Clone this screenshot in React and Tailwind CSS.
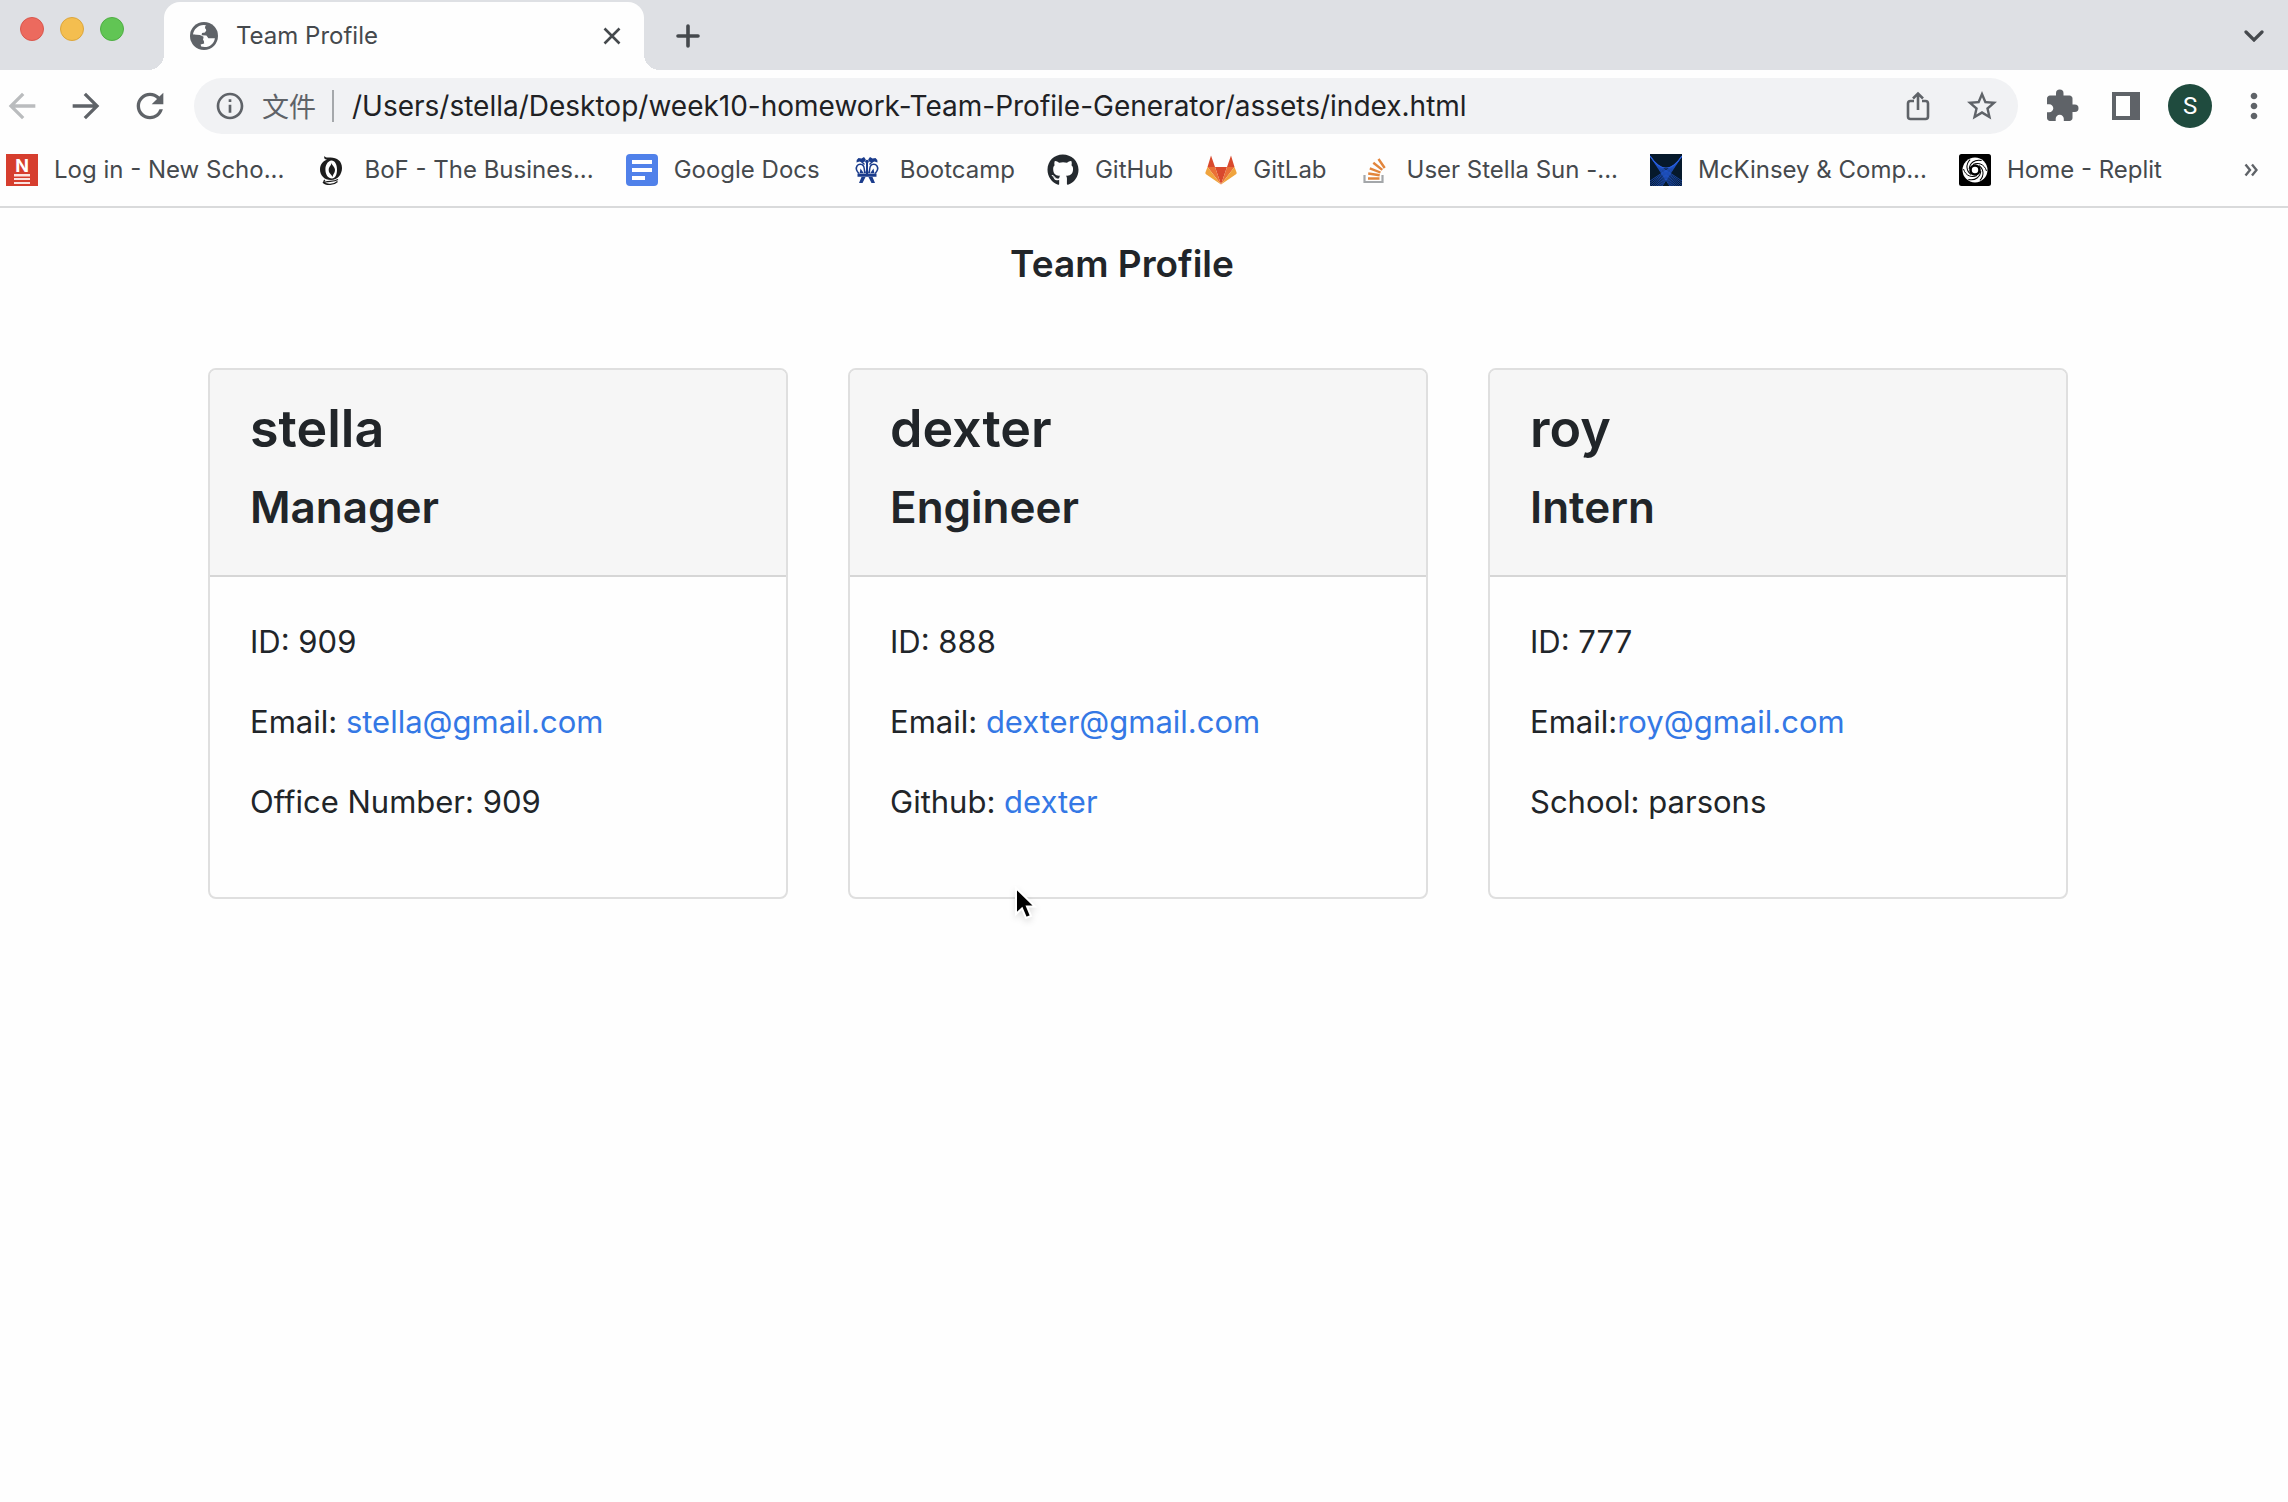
import React from "react";
import {
  MdArrowBack,
  MdArrowForward,
  MdExtension,
  MdInfoOutline,
  MdMoreVert,
  MdRefresh,
  MdStarBorder,
} from "react-icons/md";
import { FaGithub } from "react-icons/fa";

function GlobeIcon() {
  return (
    <svg viewBox="0 0 28 28" className="size-7 shrink-0" aria-hidden="true">
      <circle cx="14" cy="14" r="14" fill="#5f6368" />
      <path
        fill="#fefefe"
        d="M3 12.6C3.6 7.4 8 3.2 13.6 3l2.6.2-1 2.6 1.2 2.4-1.4 2.2-3 .6-.4 2.2 4.8.4 2 2.6h6.5c-.6 5-4.9 8.9-10.3 8.9l-3.4-.5-.6-2.2 3.6-1-.4-3-2.6-1-.6-3.2L8 13.6z"
      />
      <path fill="#5f6368" d="M3.4 12.6 10 13l3.6 1.8-.8 4.4-3.8 1.6v3.4L4 20z" />
      <path fill="#5f6368" d="m15.4 3.4 6 2 3.4 6.4-.4 3.4-4-.4-1-2.6-3.8-1.6 1.2-2.4-1.6-2.2z" />
    </svg>
  );
}

function ShareIcon() {
  return (
    <svg viewBox="0 0 24 30" className="h-[30px] w-6" fill="none" stroke="#5f6368" strokeWidth="2.6" aria-hidden="true">
      <path d="M8 10H4.500A2.500 2.500 0 0 0 2 12.500v13A2.500 2.500 0 0 0 4.500 28h15a2.500 2.500 0 0 0 2.500-2.500v-13A2.500 2.500 0 0 0 19.500 10H16" />
      <path d="M12 19V3M7 7.500l5-5 5 5" />
    </svg>
  );
}

function NewSchoolIcon() {
  return (
    <svg viewBox="0 0 32 32" className="size-8 shrink-0" aria-hidden="true">
      <rect width="32" height="32" fill="#d63e2e" />
      <text x="16" y="17.500" textAnchor="middle" fill="#fff" fontFamily="Inter, sans-serif" fontSize="18" fontWeight="700">N</text>
      <path fill="#fbe3e0" d="M8 20h16v2.500H8zM8 24h16v2H8zM8 28h16v2H8z" />
    </svg>
  );
}

function BofIcon() {
  return (
    <svg viewBox="0 0 32 32" className="size-8 shrink-0" aria-hidden="true">
      <path
        fill="#1c1c1c"
        fillRule="evenodd"
        d="M8.500 2c1 2 3 1.600 6 1.500C21 3.500 26 7 26 14c0 6.500-4.500 12-11 12C8 26 4 21 4 15.500 4 10.500 7 7 11 5.500 8.500 5.600 7.600 4 8.500 2zM15 6.500c-3.500 1-5.600 4.500-5.600 9 0 5 2.600 9 6.600 9 3.200 0 5-3.500 5-9 0-5.200-2.200-9.400-6-9z"
      />
      <path fill="#1c1c1c" d="M15.500 8c-.5 3 3.500 4.500 3.500 8 0 3-2 4-2.500 7-1-2.500-3.800-3.600-3.800-7 0-3.500 3-4.500 2.800-8z" />
      <path fill="none" stroke="#1c1c1c" strokeWidth="1.300" d="M9 26c-2 1.500-1 2.500.5 2 4-1.200 8 .2 12.500-2.500M7 28c3 3.500 11 3 14.500-.5" />
    </svg>
  );
}

function DocsIcon() {
  return (
    <svg viewBox="0 0 32 32" className="size-8 shrink-0" aria-hidden="true">
      <rect width="32" height="32" rx="4" fill="#5081ea" />
      <path fill="#fff" d="M6 6h20v4H6zM6 14h20v4H6zM6 22h13v4H6z" />
    </svg>
  );
}

function CrownIcon() {
  return (
    <svg viewBox="0 0 32 32" className="size-8 shrink-0" aria-hidden="true">
      <g fill="#1b3c8c">
        <path d="M6.500 4l3 .6L12 3l1.800 2.500-.8 2-3 1-2.500-1-3 1 .2-2.500zM23.500 4l-3 .6L18 3l-1.800 2.500.8 2 3 1 2.500-1 3 1-.2-2.500z" />
        <path d="M10 7l3 3-1 1-3-3zM20 7l-3 3 1 1 3-3z" />
        <circle cx="15" cy="7.500" r="1.800" />
        <path d="M14 9h2v11h-2zM5.500 19.500h19v3.200h-19z" />
        <path d="M8.500 14.500l3.200 4.500h-4zM21.500 14.500L18.300 19h4zM15 14l2 5h-4z" />
        <path d="M9.500 23h4l-3 6H7zM20.500 23h-4l3 6H23z" />
      </g>
      <path
        fill="none"
        stroke="#1b3c8c"
        strokeWidth="1.500"
        d="M7 19.500C4.500 17 3.500 14.500 5 12c1.500-2.200 5-2.200 6.500 0 .8 1.500 1 4 1.200 7M23 19.500c2.500-2.500 3.500-5 2-7.500-1.500-2.200-5-2.200-6.500 0-.8 1.500-1 4-1.200 7"
      />
    </svg>
  );
}

function GitLabIcon() {
  return (
    <svg viewBox="0 0 32 32" className="size-8 shrink-0" aria-hidden="true">
      <path fill="#d9492d" d="M16 30.500 22 13H10zM6 1.500 2.500 13H10zM26 1.500 29.500 13H22z" />
      <path fill="#ea7036" d="M16 30.500 10 13H2.500zM16 30.500 22 13h7.500z" />
      <path fill="#f0a43e" d="M2.500 13 .4 18.600c-.2.700 0 1.300.6 1.700l15 10.200zM29.500 13l2.100 5.600c.2.700 0 1.300-.6 1.700l-15 10.200z" />
    </svg>
  );
}

function StackIcon() {
  return (
    <svg viewBox="0 0 32 32" className="size-8 shrink-0" fill="none" aria-hidden="true">
      <path stroke="#a4a7aa" strokeWidth="2.200" d="M5.500 21v7h18v-7" />
      <path stroke="#e2853c" strokeWidth="2.400" d="M9 24.500h11.500M9.200 19.500l11.500 1.700M10.800 14.300l10.700 4.200M14.300 8.700l9 7.200M19.500 5l6.200 9" />
    </svg>
  );
}

const TANGENTS = [0, 1, 2, 3, 4, 5, 6, 7, 8, 9];

function McKinseyIcon() {
  return (
    <svg viewBox="0 0 32 32" className="size-8 shrink-0" aria-hidden="true">
      <rect width="32" height="32" fill="#06192b" />
      <g stroke="#2358d0" strokeWidth="0.700">
        {TANGENTS.map((x) => {
          const y = 14 - ((x - 16) * (x - 16)) / 21;
          const slope = (2 * (16 - x)) / 21;
          const end = y + slope * (32 - x);
          return <path key={x} d={`M${x} ${y}L32 ${end}M${32 - x} ${y}L0 ${end}`} />;
        })}
      </g>
      <path fill="none" stroke="#2a5fe0" strokeWidth="1.200" d="M0 2Q16 26 32 2" />
    </svg>
  );
}

const BLADES = [0, 60, 120, 180, 240, 300];

function ReplitIcon() {
  return (
    <svg viewBox="0 0 32 32" className="size-8 shrink-0" aria-hidden="true">
      <rect width="32" height="32" rx="2.500" fill="#000" />
      <circle cx="16" cy="16" r="12.500" fill="#fff" />
      <circle cx="16" cy="16" r="4.500" fill="#fff" stroke="#000" strokeWidth="2.600" />
      <g fill="none" stroke="#000" strokeWidth="1">
        {BLADES.map((a) => (
          <path key={a} transform={`rotate(${a} 16 16)`} d="M14 10.500C19 8 25.500 10 27.500 17" />
        ))}
      </g>
    </svg>
  );
}

const BOOKMARKS = [
  { label: "Log in - New Scho...", icon: <NewSchoolIcon /> },
  { label: "BoF - The Busines...", icon: <BofIcon /> },
  { label: "Google Docs", icon: <DocsIcon /> },
  { label: "Bootcamp", icon: <CrownIcon /> },
  { label: "GitHub", icon: <FaGithub className="size-8 shrink-0 text-[#24292e]" /> },
  { label: "GitLab", icon: <GitLabIcon /> },
  { label: "User Stella Sun -...", icon: <StackIcon /> },
  { label: "McKinsey & Comp...", icon: <McKinseyIcon /> },
  { label: "Home - Replit", icon: <ReplitIcon /> },
];

function TabStrip() {
  return (
    <header className="flex h-[70px] items-end bg-[#dee0e4]">
      <div className="flex items-center gap-4 self-start pt-[17px] pl-5">
        <button aria-label="Close window" className="size-6 rounded-full border border-[#d9574d] bg-[#ec6a5e]" />
        <button aria-label="Minimize window" className="size-6 rounded-full border border-[#dca63c] bg-[#f4be4f]" />
        <button aria-label="Zoom window" className="size-6 rounded-full border border-[#4fae43] bg-[#61c554]" />
      </div>
      <div className="ml-6 size-4 bg-[radial-gradient(circle_at_0_0,transparent_16px,#fefefe_16px)]" />
      <div className="flex h-[68px] w-[480px] items-center rounded-t-2xl bg-[#fefefe] pr-5 pl-[26px]">
        <GlobeIcon />
        <span className="ml-[18px] flex-1 text-2xl text-[#45494d]">Team Profile</span>
        <button aria-label="Close tab" className="flex size-6 items-center justify-center">
          <svg viewBox="0 0 18 18" className="size-[18px]" stroke="#45494d" strokeWidth="2.600" aria-hidden="true">
            <path d="M1.500 1.500l15 15M16.500 1.500l-15 15" />
          </svg>
        </button>
      </div>
      <div className="size-4 bg-[radial-gradient(circle_at_100%_0,transparent_16px,#fefefe_16px)]" />
      <button aria-label="New tab" className="ml-4 flex h-[68px] w-6 items-center justify-center">
        <svg viewBox="0 0 24 24" className="size-6" stroke="#45494d" strokeWidth="3.600" strokeLinecap="round" aria-hidden="true">
          <path d="M12 2v20M2 12h20" />
        </svg>
      </button>
      <button aria-label="Search tabs" className="mr-6 ml-auto flex h-[68px] items-center">
        <svg viewBox="0 0 20 12" className="h-3 w-5" fill="none" stroke="#45494d" strokeWidth="3.200" strokeLinecap="round" aria-hidden="true">
          <path d="M2 2l8 8 8-8" />
        </svg>
      </button>
    </header>
  );
}

function Toolbar() {
  return (
    <div className="flex h-[72px] items-center pr-3.5 pl-0.5 text-[#5f6368]">
      <button aria-label="Back" className="text-[#babcbe]"><MdArrowBack className="size-10" /></button>
      <button aria-label="Forward" className="ml-6"><MdArrowForward className="size-10" /></button>
      <button aria-label="Reload" className="ml-6"><MdRefresh className="size-10" /></button>
      <div className="ml-6 flex h-14 flex-1 items-center rounded-full bg-[#f1f2f4] pr-[18px] pl-5">
        <button className="flex items-center" aria-label="View site information">
          <MdInfoOutline className="size-8" />
        </button>
        <label htmlFor="address" className="ml-4 border-r-2 border-[#a5a8ab] pr-4 font-['Noto_Sans_CJK_SC',sans-serif] text-[27px] leading-8">
          文件
        </label>
        <input
          id="address"
          type="text"
          defaultValue="/Users/stella/Desktop/week10-homework-Team-Profile-Generator/assets/index.html"
          className="ml-[18px] min-w-0 flex-1 bg-transparent text-[28px] text-[#202124] outline-none"
        />
        <button aria-label="Share"><ShareIcon /></button>
        <button aria-label="Bookmark this tab" className="ml-[34px]"><MdStarBorder className="size-9" /></button>
      </div>
      <button aria-label="Extensions" className="ml-[26px]"><MdExtension className="size-9" /></button>
      <button aria-label="Side panel" className="ml-8">
        <svg viewBox="0 0 28 28" className="size-7" aria-hidden="true">
          <path fill="#5f6368" fillRule="evenodd" d="M0 0h28v28H0zM4 4v20h14V4z" />
        </svg>
      </button>
      <button aria-label="Profile" className="ml-7 flex size-11 items-center justify-center rounded-full bg-[#1f4b3e] font-[Roboto,sans-serif] text-2xl text-white">
        S
      </button>
      <button aria-label="Menu" className="ml-[22px]"><MdMoreVert className="size-10" /></button>
    </div>
  );
}

function BookmarksBar() {
  return (
    <nav className="flex h-[66px] items-center gap-8 border-b-2 border-[#d9dadb] pb-2 pr-[30px] pl-1.5 text-2xl whitespace-nowrap text-[#45494d]">
      {BOOKMARKS.map((b) => (
        <a key={b.label} href="#" className="flex items-center gap-4">
          {b.icon}
          <span>{b.label}</span>
        </a>
      ))}
      <button aria-label="More bookmarks" className="ml-auto">
        <svg viewBox="0 0 14 14" className="size-3.5" fill="none" stroke="#5f6368" strokeWidth="2.400" aria-hidden="true">
          <path d="M1.500 1.500L6 7l-4.500 5.500M8 1.500L12.500 7 8 12.500" />
        </svg>
      </button>
    </nav>
  );
}

const TEAM = [
  {
    name: "stella",
    role: "Manager",
    id: "909",
    emailLabel: "Email: ",
    email: "stella@gmail.com",
    extra: <>Office Number: 909</>,
  },
  {
    name: "dexter",
    role: "Engineer",
    id: "888",
    emailLabel: "Email: ",
    email: "dexter@gmail.com",
    extra: <>Github: <a href="#" className="text-[#3478e5]">dexter</a></>,
  },
  {
    name: "roy",
    role: "Intern",
    id: "777",
    emailLabel: "Email:",
    email: "roy@gmail.com",
    extra: <>School: parsons</>,
  },
];

function MemberCard({ member }) {
  return (
    <article className="overflow-hidden rounded-lg border-2 border-[#dfdfdf]">
      <div className="border-b-2 border-[#d6d6d6] bg-[#f6f6f6] px-10 pt-[26px] pb-[39px] font-semibold">
        <h2 className="text-[52px] leading-[66px]">{member.name}</h2>
        <h3 className="mt-4 text-[44px] leading-[58px]">{member.role}</h3>
      </div>
      <div className="flex flex-col gap-8 px-10 pt-[41px] pb-[71px] text-[31px] leading-12">
        <p>ID: {member.id}</p>
        <p>
          {member.emailLabel}
          <a href={`mailto:${member.email}`} className="text-[#3478e5]">{member.email}</a>
        </p>
        <p>{member.extra}</p>
      </div>
    </article>
  );
}

function Pointer() {
  return (
    <svg viewBox="0 0 24 36" className="absolute top-[886px] left-[1014px] h-9 w-6 drop-shadow-md" aria-hidden="true">
      <path d="M2 2v26l6-5.500 4 9.500 5-2-4-9.500h8z" fill="#000" stroke="#fff" strokeWidth="2" />
    </svg>
  );
}

export default function App() {
  return (
    <div className="relative min-h-screen bg-[#fefefe] font-[Inter,sans-serif] text-[#212529]">
      <TabStrip />
      <Toolbar />
      <BookmarksBar />
      <main className="pt-8">
        <h1 className="pr-11 text-center text-[37px] leading-12 font-semibold">Team Profile</h1>
        <div className="mt-20 mr-55 ml-52 grid grid-cols-3 gap-15">
          {TEAM.map((m) => (
            <MemberCard key={m.name} member={m} />
          ))}
        </div>
      </main>
      <Pointer />
    </div>
  );
}
